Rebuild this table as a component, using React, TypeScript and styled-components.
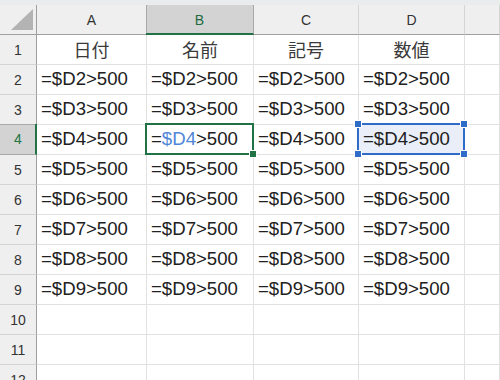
import React from "react";
import styled, { createGlobalStyle, css } from "styled-components";

const GlobalStyle = createGlobalStyle`
  html, body {
    margin: 0;
    padding: 0;
    background: #ffffff;
  }
  body {
    font-family: "Liberation Sans", Arial, sans-serif;
  }
`;

const COLS = ["A", "B", "C", "D"];
const COL_WIDTHS = [110, 107, 105, 106];
const HEADINGS = ["日付", "名前", "記号", "数値"];
const ROW_COUNT = 12;

const ACTIVE_COL = 1;
const ACTIVE_ROW = 4;
const SELECTED_COL = 3;

const Sheet = styled.div`
  width: 500px;
  height: 380px;
  overflow: hidden;
  background: #ffffff;
`;

const TopStrip = styled.div`
  height: 5px;
  background: #e9ebed;
`;

const Grid = styled.div`
  display: grid;
  grid-template-columns: 37px ${COL_WIDTHS.map((w) => `${w}px`).join(" ")} 1fr;
  grid-auto-rows: 30px;
`;

const Corner = styled.div`
  display: flex;
  align-items: flex-end;
  justify-content: flex-end;
  padding: 0 3px 4px 0;
  box-sizing: border-box;
  background: #efefef;
  border-right: 1px solid #9f9f9f;
  border-bottom: 1px solid #9f9f9f;
`;

const ColHeader = styled.div<{ $selected?: boolean }>`
  display: flex;
  align-items: center;
  justify-content: center;
  box-sizing: border-box;
  font-size: 14px;
  color: #333333;
  background: #efefef;
  border-right: 1px solid #d4d4d4;
  border-bottom: 1px solid #9f9f9f;

  ${(p) =>
    p.$selected &&
    css`
      background: #d3d3d3;
      color: #1e6b3f;
      border-right-color: #a8a8a8;
      border-bottom: 2px solid #217346;
      box-shadow: inset 1px 0 0 #a8a8a8;
      margin-left: -1px;
      padding-top: 1px;
    `}
`;

const RowHeader = styled.div<{ $selected?: boolean }>`
  display: flex;
  align-items: center;
  justify-content: center;
  box-sizing: border-box;
  font-size: 14px;
  color: #333333;
  background: #efefef;
  border-right: 1px solid #9f9f9f;
  border-bottom: 1px solid #d4d4d4;

  ${(p) =>
    p.$selected &&
    css`
      background: #d3d3d3;
      color: #217346;
      border-right: 2px solid #217346;
      border-bottom-color: #a8a8a8;
      box-shadow: inset 0 1px 0 #a8a8a8;
      margin-top: -1px;
      padding-left: 1px;
    `}
`;

const Cell = styled.div<{ $center?: boolean; $tint?: boolean }>`
  position: relative;
  display: flex;
  align-items: center;
  justify-content: ${(p) => (p.$center ? "center" : "flex-start")};
  box-sizing: border-box;
  padding: 0 0 1px 4px;
  border-right: 1px solid #e1e1e1;
  border-bottom: 1px solid #e1e1e1;
  background: ${(p) => (p.$tint ? "#e9eef8" : "#ffffff")};
  font-size: 18.6px;
  color: #202020;
  white-space: nowrap;
`;

const Heading = styled.span`
  font-family: "Noto Sans CJK JP", "Noto Sans", sans-serif;
  font-size: 18px;
  color: #3a3a3a;
  padding-right: 4px;
`;

const Ref = styled.span`
  color: #4f86d8;
`;

const Frame = styled.div<{ $color: string }>`
  position: absolute;
  top: -2px;
  left: -2px;
  right: -1px;
  bottom: -1px;
  border: 2px solid ${(p) => p.$color};
  pointer-events: none;
  z-index: 2;
`;

const Handle = styled.div<{ $color: string; $x: "left" | "right"; $y: "top" | "bottom" }>`
  position: absolute;
  ${(p) => p.$x}: -4px;
  ${(p) => p.$y}: -4px;
  width: 6px;
  height: 6px;
  background: ${(p) => p.$color};
  outline: 1px solid #ffffff;
`;

const CornerMark = () => (
  <svg width="22" height="21" viewBox="0 0 22 21">
    <polygon points="22,0 22,21 0,21" fill="#b3b3b3" />
  </svg>
);

const Formula = ({ row, highlight }: { row: number; highlight?: boolean }) =>
  highlight ? (
    <span>
      =<Ref>$D{row}</Ref>&gt;500
    </span>
  ) : (
    <span>=$D{row}&gt;500</span>
  );

export default function App() {
  const rows = Array.from({ length: ROW_COUNT }, (_, i) => i + 1);

  return (
    <Sheet>
      <GlobalStyle />
      <TopStrip />
      <Grid>
        <Corner>
          <CornerMark />
        </Corner>
        {COLS.map((c, i) => (
          <ColHeader key={c} $selected={i === ACTIVE_COL}>
            {c}
          </ColHeader>
        ))}
        <ColHeader />

        {rows.map((r) => (
          <React.Fragment key={r}>
            <RowHeader $selected={r === ACTIVE_ROW}>{r}</RowHeader>
            {COLS.map((c, ci) => {
              const active = r === ACTIVE_ROW && ci === ACTIVE_COL;
              const selected = r === ACTIVE_ROW && ci === SELECTED_COL;
              return (
                <Cell key={c} $center={r === 1} $tint={selected}>
                  {r === 1 && <Heading>{HEADINGS[ci]}</Heading>}
                  {r > 1 && r < 10 && <Formula row={r} highlight={active} />}
                  {active && (
                    <Frame $color="#217346">
                      <Handle $color="#217346" $x="right" $y="bottom" />
                    </Frame>
                  )}
                  {selected && (
                    <Frame $color="#2f6cc8">
                      <Handle $color="#2f6cc8" $x="left" $y="top" />
                      <Handle $color="#2f6cc8" $x="right" $y="top" />
                      <Handle $color="#2f6cc8" $x="left" $y="bottom" />
                      <Handle $color="#2f6cc8" $x="right" $y="bottom" />
                    </Frame>
                  )}
                </Cell>
              );
            })}
            <Cell />
          </React.Fragment>
        ))}
      </Grid>
    </Sheet>
  );
}
